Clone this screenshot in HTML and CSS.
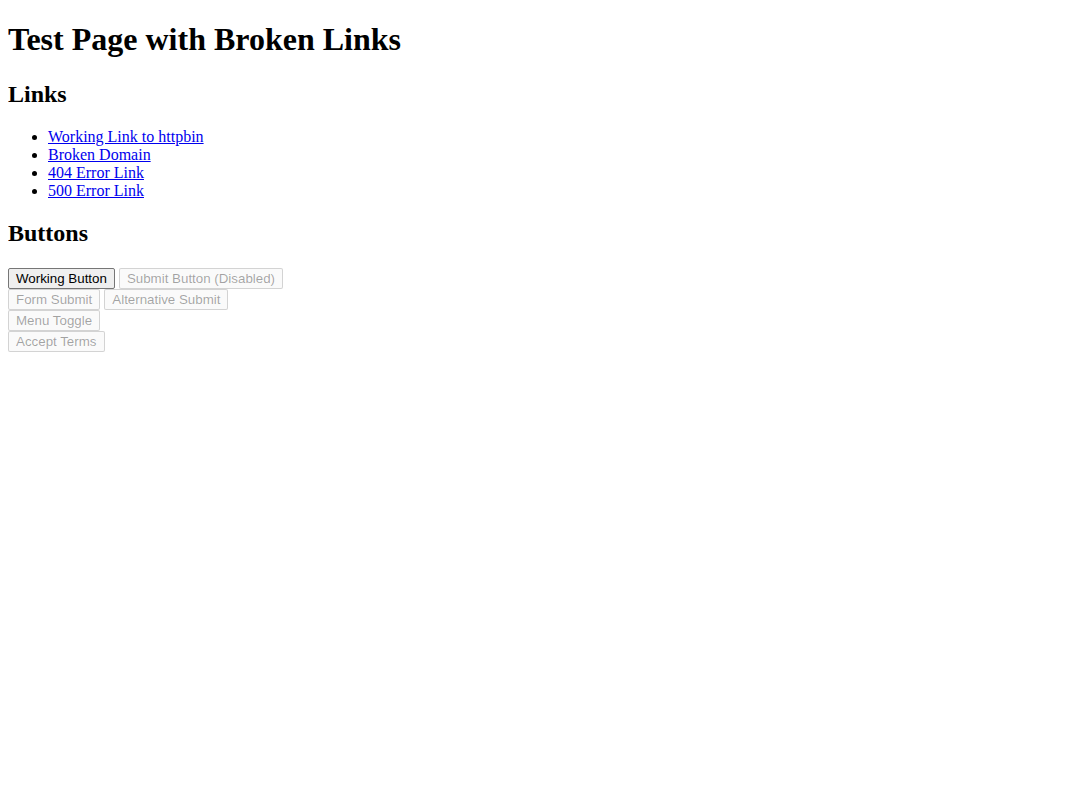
FILE: index.html
```html
<!DOCTYPE html>
<html lang="en">
<head>
<meta charset="utf-8">
<title>Test Page with Broken Links</title>
<link rel="stylesheet" href="styles.css">
</head>
<body class="page">
<h1 class="title">Test Page with Broken Links</h1>
<h2 class="section-title">Links</h2>
<ul class="link-list">
  <li><a class="link" href="#">Working Link to httpbin</a></li>
  <li><a class="link" href="#">Broken Domain</a></li>
  <li><a class="link" href="#">404 Error Link</a></li>
  <li><a class="link" href="#">500 Error Link</a></li>
</ul>
<h2 class="section-title buttons-title">Buttons</h2>
<div class="button-row">
  <button class="btn" type="button">Working Button</button>
  <button class="btn" type="button" disabled>Submit Button (Disabled)</button>
</div>
<form class="button-row">
  <button class="btn" type="button" disabled>Form Submit</button>
  <button class="btn" type="button" disabled>Alternative Submit</button>
</form>
<div class="button-row">
  <button class="btn" type="button" disabled>Menu Toggle</button>
</div>
<div class="button-row">
  <button class="btn" type="button" disabled>Accept Terms</button>
</div>
</body>
</html>
```

FILE: styles.css
```css
.page {
  margin: 8px;
  font-family: "Liberation Serif", "Times New Roman", serif;
  font-size: 16px;
  color: #000;
  background: #fff;
}
.title {
  font-size: 32px;
  font-weight: bold;
  margin: 13.44px 0 22.44px;
}
.section-title {
  font-size: 24px;
  font-weight: bold;
  margin: 19.92px 0;
}
.buttons-title {
  margin-bottom: 21px;
}
.link-list {
  margin: 16px 0;
  padding-left: 40px;
  list-style: disc;
}
.link {
  color: #0000ee;
  text-decoration: underline;
}
.button-row {
  margin: 0;
  display: flex;
  gap: 4px;
}
.btn {
  font-family: "Liberation Sans", Arial, sans-serif;
  font-size: 13.333px;
  line-height: 15px;
  padding: 2px 7px;
  margin: 0;
  border: 1px solid #767676;
  border-radius: 2px;
  background-color: #efefef;
  color: #000;
}
.btn:disabled {
  border-color: rgba(118, 118, 118, 0.3);
  background-color: rgba(239, 239, 239, 0.3);
  color: rgba(16, 16, 16, 0.38);
}
```
